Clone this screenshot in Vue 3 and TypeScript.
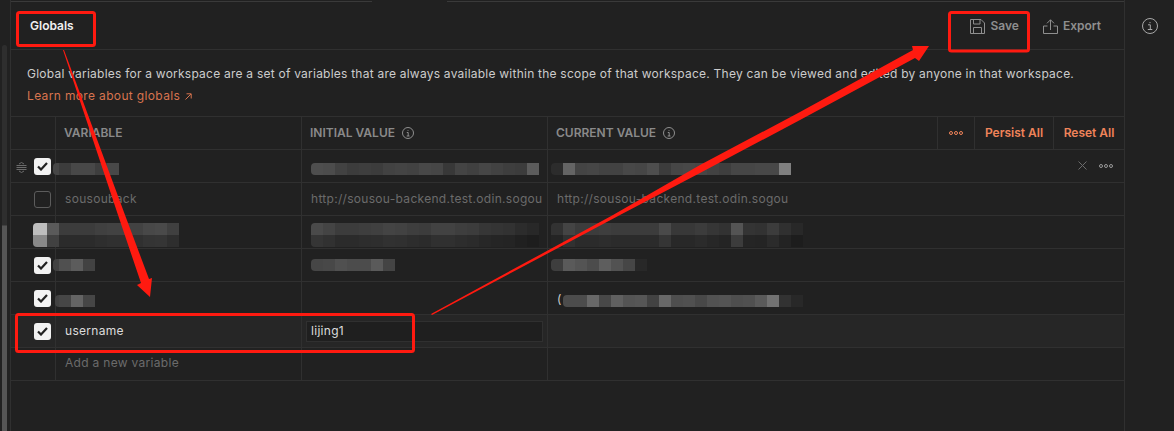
<script setup lang="ts">
interface Mosaic { grays: number[]; offset: number; drop?: number; first?: number }
interface Row {
  name?: string; initial?: string; current?: string; lead?: string;
  nameM?: Mosaic; initialM?: Mosaic; currentM?: Mosaic;
  state: 'on' | 'off' | 'none'; dim?: boolean; active?: boolean; grip?: boolean; add?: boolean; tall?: boolean;
}
const bg = (g: number, tall?: boolean) => {
  const low = Math.round(g * 0.72);
  return tall
    ? `linear-gradient(rgb(${g},${g},${g}) 50%, rgb(${low},${low},${low}) 50%)`
    : `rgb(${g},${g},${g})`;
};
const rows: Row[] = [
  { state: 'on', grip: true,
    nameM: { offset: -12, drop: 5, first: 6, grays: [70, 60, 72, 72, 62, 72] },
    initialM: { offset: 0, drop: 5, grays: [78, 76, 66, 60, 62, 60, 66, 68, 66, 72, 70, 56, 68, 64, 70, 66, 62, 60, 92] },
    currentM: { offset: -6, drop: 5, grays: [44, 100, 68, 70, 66, 66, 72, 70, 78, 60, 70, 72, 70, 66, 62, 70, 70, 72, 72, 128] } },
  { state: 'off', dim: true, name: 'sousouback', initial: 'http://sousou-backend.test.odin.sogou', current: 'http://sousou-backend.test.odin.sogou' },
  { state: 'none', tall: true,
    nameM: { offset: -32, drop: 5, first: 14, grays: [190, 90, 60, 60, 60, 64, 66, 66, 66, 72, 74, 64] },
    initialM: { offset: 0, drop: 5, grays: [74, 68, 60, 60, 62, 64, 68, 66, 62, 60, 66, 66, 62, 60, 54, 52, 50, 44, 40] },
    currentM: { offset: -6, drop: 5, grays: [50, 68, 60, 60, 62, 60, 60, 60, 60, 74, 56, 56, 60, 54, 50, 84, 52, 50, 60, 48, 40] } },
  { state: 'on',
    nameM: { offset: -12, first: 6, grays: [66, 80, 92, 66] },
    initialM: { offset: 0, grays: [70, 72, 80, 76, 76, 90, 68] },
    currentM: { offset: -6, grays: [62, 90, 84, 76, 94, 82, 70, 40] } },
  { state: 'on',
    nameM: { offset: -10, drop: 5, first: 4, grays: [66, 70, 100, 70] },
    lead: '(',
    currentM: { offset: 1, drop: 5, grays: [76, 76, 104, 72, 96, 84, 86, 66, 104, 78, 80, 72, 82, 84, 78, 80, 90, 114, 50, 40] } },
  { state: 'on', active: true, name: 'username', initial: 'lijing1' },
  { state: 'none', add: true, name: 'Add a new variable' },
];
const mosStyle = (m: Mosaic) => ({ marginLeft: m.offset + 'px', marginTop: (m.drop ?? 0) + 'px' });
const cellStyle = (m: Mosaic, k: number, tall?: boolean, g = 0) => ({
  background: bg(g, tall),
  width: k === 0 && m.first ? m.first + 'px' : undefined,
});
</script>

<template>
  <div class="page">
    <aside class="rail"><div class="thumb"></div></aside>
    <main class="main">
      <div class="topline"></div>
      <header class="bar">
        <h1 class="title">Globals</h1>
        <div class="actions">
          <button class="act">
            <svg width="15" height="15" viewBox="0 0 15 15" fill="none" stroke="#8f8f8f" stroke-width="1"><path d="M.5.5h10.500l3.500 3.500v10.500H.5z"/><path d="M3.500.5v4.500h6.500V.5M3.500 14.500V8.500h8v6"/></svg>
            Save
          </button>
          <button class="act">
            <svg width="15" height="15" viewBox="0 0 15 15" fill="none" stroke="#8f8f8f" stroke-width="1"><path d="M4.500 7H.5v7.500h14V7h-4"/><path d="M7.500 11V.8M4 4.300 7.500.8 11 4.300"/></svg>
            Export
          </button>
        </div>
      </header>
      <section class="desc">
        <p>Global variables for a workspace are a set of variables that are always available within the scope of that workspace. They can be viewed and edited by anyone in that workspace.</p>
        <a class="learn">Learn more about globals <svg class="ne" width="7" height="7" viewBox="0 0 7 7" fill="none" stroke="#d8744f"><path d="M.5 6.500 6 1M1.500.8H6.200V5.500"/></svg></a>
      </section>
      <div class="table">
        <div class="tr head">
          <div class="c0"></div>
          <div class="c1"><span class="htxt">VARIABLE</span></div>
          <div class="c1"><span class="htxt">INITIAL VALUE</span> <svg class="i" width="12" height="12" viewBox="0 0 12 12" fill="none" stroke="#8f8f8f"><circle cx="6" cy="6" r="5.500"/><path d="M4.800 5.500H6.200V9M4.700 9H7.500M6 3v.8"/></svg></div>
          <div class="c1 wide"><span class="htxt">CURRENT VALUE</span> <svg class="i" width="12" height="12" viewBox="0 0 12 12" fill="none" stroke="#8f8f8f"><circle cx="6" cy="6" r="5.500"/><path d="M4.800 5.500H6.200V9M4.700 9H7.500M6 3v.8"/></svg></div>
          <div class="hact dots"><svg width="14" height="4" viewBox="0 0 14 4" fill="none" stroke="#f0845a"><circle cx="2" cy="2" r="1.500"/><circle cx="7" cy="2" r="1.500"/><circle cx="12" cy="2" r="1.500"/></svg></div>
          <div class="hact persist"><span class="htxt">Persist All</span></div>
          <div class="hact reset"><span class="htxt">Reset All</span></div>
        </div>
        <div v-for="(r, i) in rows" :key="i" class="tr" :class="{ dim: r.dim, active: r.active, add: r.add }">
          <div class="c0">
            <svg v-if="r.grip" class="grip" width="11" height="11" viewBox="0 0 11 11" fill="none" stroke="#6c6c6c"><path d="M.5 3.500h10M.5 5.500h10M.5 7.500h10M3 2 5.500.5 8 2M3 9l2.500 1.500L8 9"/></svg>
            <span v-if="r.state === 'on'" class="check on"><svg width="11" height="9" viewBox="0 0 11 9" fill="none" stroke="#212121" stroke-width="2.200"><path d="M1 4.500 4 7.500 10 1"/></svg></span>
            <span v-if="r.state === 'off'" class="check off"></span>
          </div>
          <div class="c1 cell">
            <span v-if="r.nameM" class="mos" :class="{ two: r.tall }" :style="mosStyle(r.nameM)"><i v-for="(g, k) in r.nameM.grays" :key="k" :style="cellStyle(r.nameM, k, r.tall, g)"></i></span>
            <span v-else class="txt">{{ r.name }}</span>
          </div>
          <div class="c1 cell">
            <span v-if="r.initialM" class="mos" :class="{ two: r.tall }" :style="mosStyle(r.initialM)"><i v-for="(g, k) in r.initialM.grays" :key="k" :style="cellStyle(r.initialM, k, r.tall, g)"></i></span>
            <span v-else-if="r.active" class="input">{{ r.initial }}</span>
            <span v-else class="txt">{{ r.initial }}</span>
          </div>
          <div class="c1 cell wide">
            <span v-if="r.lead" class="lead">{{ r.lead }}</span>
            <span v-if="r.currentM" class="mos" :class="{ two: r.tall }" :style="mosStyle(r.currentM)"><i v-for="(g, k) in r.currentM.grays" :key="k" :style="cellStyle(r.currentM, k, r.tall, g)"></i></span>
            <span v-else class="txt">{{ r.current }}</span>
            <span v-if="r.grip" class="rowact">
              <svg width="9" height="9" viewBox="0 0 9 9" stroke="#6c6c6c" fill="none"><path d="M.5.5l8 8M8.500.5l-8 8"/></svg>
              <svg width="14" height="4" viewBox="0 0 14 4" fill="none" stroke="#9a9a9a"><circle cx="2" cy="2" r="1.500"/><circle cx="7" cy="2" r="1.500"/><circle cx="12" cy="2" r="1.500"/></svg>
            </span>
          </div>
        </div>
      </div>
    </main>
    <aside class="side">
      <svg width="16" height="16" viewBox="0 0 16 16" fill="none" stroke="#a8a8a8"><circle cx="8" cy="8" r="7.500"/><path d="M6 6.800h2.300v4.700M5.800 11.500h4.500M8 4v1.200"/></svg>
    </aside>
    <svg class="marks" width="1174" height="431" viewBox="0 0 1174 431">
      <g fill="none" stroke="#ff1a10" stroke-width="3">
        <rect x="17.500" y="12.500" width="77" height="33" rx="2"/>
        <rect x="949.500" y="12.500" width="79" height="38.500" rx="2"/>
        <rect x="16.500" y="314.500" width="397" height="37" rx="2"/>
      </g>
      <g fill="#ff1a10">
        <polygon points="63,50 64,50 125,215 149,279 152,278 150,297 137,285 141,283 118,215"/>
        <polygon points="431,314 613,215 700,165 800,112 913,50 912,46 929,46 919,61 915,58 800,120 700,173 620,215 432,315"/>
      </g>
    </svg>
  </div>
</template>

<style>
html, body { margin: 0; background: #212121; }
</style>

<style scoped>
.page { position: relative; display: flex; width: 1174px; height: 431px; overflow: hidden; background: #212121; font-family: Inter, "Liberation Sans", sans-serif; font-size: 12px; color: #cccccc; }
.rail { width: 10px; flex: none; border-right: 1px solid #303030; padding-top: 45px; }
.thumb { width: 5px; height: 386px; margin-left: 2px; border-radius: 3px 3px 0 0; background: linear-gradient(#2e2e2e 0, #2e2e2e 180px, #555 181px); }
.main { width: 1113px; flex: none; box-sizing: border-box; padding-top: 1px; }
.topline { height: 1px; background: linear-gradient(90deg, #3a3a3a 361px, transparent 361px, transparent 436px, #3a3a3a 436px); }
.bar { height: 48px; box-sizing: border-box; display: flex; justify-content: space-between; border-bottom: 1px solid #303030; padding: 0 23px 0 19px; }
.title { margin: 17px 0 0; font-size: 12px; line-height: 14px; font-weight: 600; color: #f0f0f0; }
.actions { display: flex; gap: 24px; align-items: flex-start; padding-top: 15px; }
.act { all: unset; display: flex; align-items: center; gap: 5px; font-size: 12px; font-weight: 600; color: #8f8f8f; line-height: 18px; }
.desc { height: 67px; box-sizing: border-box; border-bottom: 1px solid #303030; padding: 15px 16px 0; }
.desc p { margin: 0; line-height: 18px; white-space: nowrap; letter-spacing: 0.23px; }
.learn { display: flex; align-items: center; gap: 5px; margin-top: 4px; line-height: 18px; color: #d8744f; letter-spacing: 0.35px; }
.table { display: flex; flex-direction: column; }
.tr { display: flex; height: 33px; box-sizing: border-box; border-bottom: 1px solid #303030; }
.c0 { width: 44px; flex: none; display: flex; align-items: center; position: relative; padding-left: 23px; box-sizing: border-box; }
.c1 { width: 246px; flex: none; box-sizing: border-box; border-left: 1px solid #303030; padding-left: 8px; display: flex; align-items: center; font-weight: 600; color: #8a8a8a; gap: 7px; }
.wide { flex: 1; min-width: 0; }
.htxt { margin-bottom: 2px; }
.cell { font-weight: 400; color: #cccccc; position: relative; letter-spacing: 0.3px; padding-left: 9px; }
.txt { margin-bottom: 2px; }
.hact { flex: none; border-left: 1px solid #303030; display: flex; align-items: center; justify-content: center; box-sizing: border-box; font-weight: 600; color: #f0845a; }
.dots { width: 37px; }
.persist { width: 79px; }
.reset { width: 71px; }
.grip { position: absolute; left: 5px; top: 12px; }
.check { width: 17px; height: 17px; box-sizing: border-box; border-radius: 3px; display: flex; align-items: center; justify-content: center; }
.on { background: #f2f2f2; }
.off { border: 1px solid #5c5c5c; }
.dim .cell { color: #6b6b6b; }
.add .cell { color: #6b6b6b; padding-bottom: 2px; }
.active { background: #262626; }
.active .cell { color: #dcdcdc; }
.input { width: 237px; height: 21px; margin-left: -5px; padding: 0 0 2px 4px; box-sizing: border-box; background: #1f1f1f; border: 1px solid #303030; display: flex; align-items: center; }
.lead { margin-right: -7px; }
.mos { display: flex; height: 12px; flex: none; border-radius: 4px 0 0 4px; overflow: hidden; }
.mos.two { height: 24px; }
.mos i { width: 12px; height: 100%; display: block; flex: none; }
.rowact { position: absolute; right: 11px; top: 11px; display: flex; gap: 12px; align-items: center; }
.side { flex: 1; border-left: 1px solid #303030; display: flex; justify-content: center; padding-top: 18px; align-items: flex-start; }
.marks { position: absolute; left: 0; top: 0; pointer-events: none; }
</style>
